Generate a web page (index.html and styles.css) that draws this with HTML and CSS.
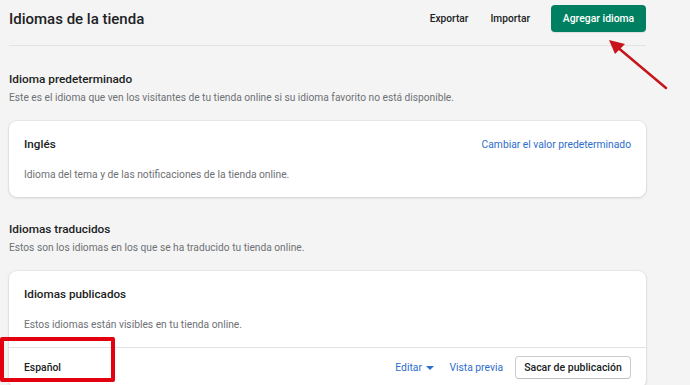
FILE: index.html
```html
<!DOCTYPE html>
<html lang="es">
<head>
    <meta charset="UTF-8">
    <title>Idiomas de la tienda</title>
    <link rel="stylesheet" href="styles.css">
</head>
<body>

    <!-- Cabecera -->
    <div class="page-header">
        <h1>Idiomas de la tienda</h1>
        <div class="header-actions">
            <button class="plain-btn">Exportar</button>
            <button class="plain-btn">Importar</button>
            <button class="primary-btn">Agregar idioma</button>
        </div>
    </div>

    <!-- Idioma predeterminado -->
    <div class="section">
        <h2>Idioma predeterminado</h2>
        <p class="section-desc">Este es el idioma que ven los visitantes de tu tienda online si su idioma favorito no está disponible.</p>
        <div class="card">
            <div class="card-block">
                <div class="card-title-row">
                    <h3>Inglés</h3>
                    <a class="link">Cambiar el valor predeterminado</a>
                </div>
                <p class="card-desc">Idioma del tema y de las notificaciones de la tienda online.</p>
            </div>
        </div>
    </div>

    <!-- Idiomas traducidos -->
    <div class="section">
        <h2>Idiomas traducidos</h2>
        <p class="section-desc">Estos son los idiomas en los que se ha traducido tu tienda online.</p>
        <div class="card">
            <div class="card-block">
                <h3>Idiomas publicados</h3>
                <p class="card-desc">Estos idiomas están visibles en tu tienda online.</p>
            </div>
            <div class="lang-row">
                <span class="lang-name">Español</span>
                <div class="row-actions">
                    <a class="link">Editar <span class="caret"></span></a>
                    <a class="link">Vista previa</a>
                    <button class="outline-btn">Sacar de publicación</button>
                </div>
            </div>
        </div>
    </div>

    <!-- Anotaciones -->
    <div class="mark-box"></div>
    <svg class="mark-arrow" width="70" height="60" viewBox="0 0 70 60">
        <line x1="60" y1="51" x2="10" y2="9" stroke="#c8141b" stroke-width="2.5" stroke-linecap="round"/>
        <polygon points="3,3 19,7 9,17" fill="#c8141b"/>
    </svg>

</body>
</html>
```

FILE: styles.css
```css
/* Estilos básicos */
body {
    font-family: Roboto, "Liberation Sans", sans-serif;
    background-color: #f4f4f4;
    color: #202223;
    margin: 0;
    padding: 0 44px 0 9px;
    position: relative;
    overflow: hidden;
    height: 385px;
}

h1, h2, h3, p {
    margin: 0;
}

/* Cabecera */
.page-header {
    display: flex;
    justify-content: space-between;
    align-items: center;
    padding: 5px 0 13px;
    border-bottom: 1px solid #e1e3e5;
}

.page-header h1 {
    font-size: 15px;
    font-weight: 500;
}

.header-actions {
    display: flex;
    align-items: center;
}

.plain-btn {
    font-family: inherit;
    font-size: 10.2px;
    font-weight: 500;
    color: #202223;
    background: none;
    border: none;
    padding: 0 11px;
    height: 27px;
}

.primary-btn {
    font-family: inherit;
    font-size: 10.4px;
    font-weight: 500;
    color: #fff;
    background-color: #008060;
    border: none;
    border-radius: 4px;
    height: 27px;
    width: 95px;
    padding: 0;
    margin-left: 10px;
    box-shadow: 0 1px 0 rgba(0, 0, 0, 0.08);
}

/* Secciones */
.section {
    padding-top: 25px;
}

.section + .section {
    padding-top: 24px;
}

.section h2 {
    font-size: 11.8px;
    font-weight: 500;
    line-height: 16px;
}

.section-desc {
    font-size: 10.2px;
    color: #6d7175;
    margin-top: 3px;
    line-height: 16px;
}

.card {
    background-color: #fff;
    border-radius: 8px;
    box-shadow: 0 0 0 1px rgba(63, 63, 68, 0.05), 0 1px 3px rgba(63, 63, 68, 0.15);
    margin-top: 15px;
}

.card-block {
    padding: 15px 15px 14px;
}

.card-title-row {
    display: flex;
    justify-content: space-between;
    align-items: center;
}

.card h3 {
    font-size: 11.7px;
    font-weight: 500;
    line-height: 16px;
}

.card-desc {
    font-size: 10.25px;
    color: #6d7175;
    line-height: 16px;
    margin-top: 15px;
}

.link {
    font-size: 10.3px;
    color: #2c6ecb;
    cursor: pointer;
}

/* Fila de idioma */
.lang-row {
    display: flex;
    justify-content: space-between;
    align-items: center;
    border-top: 1px solid #e1e3e5;
    padding: 8px 15px 9px;
}

.lang-name {
    font-size: 10.4px;
    font-weight: 500;
}

.row-actions {
    display: flex;
    align-items: center;
    gap: 15px;
}

.caret {
    display: inline-block;
    border-left: 4px solid transparent;
    border-right: 4px solid transparent;
    border-top: 4px solid #2c6ecb;
    margin-left: 2px;
    vertical-align: middle;
}

.outline-btn {
    font-family: inherit;
    font-size: 10.5px;
    font-weight: 500;
    color: #202223;
    background: #fff;
    border: 1px solid #c9cccf;
    border-bottom-color: #babfc3;
    border-radius: 4px;
    height: 23px;
    width: 116px;
    padding: 0;
    margin-left: -3px;
}

/* Anotaciones */
.mark-box {
    position: absolute;
    left: 0;
    top: 337px;
    width: 107px;
    height: 37px;
    border: 4px solid #e3000f;
    border-radius: 2px;
}

.mark-arrow {
    position: absolute;
    left: 606px;
    top: 37px;
}
```
